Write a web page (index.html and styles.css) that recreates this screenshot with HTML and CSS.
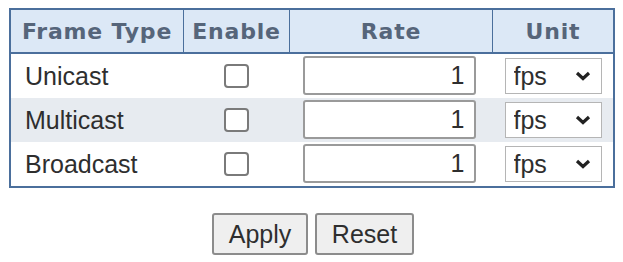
FILE: index.html
```html
<!DOCTYPE html>
<html lang="en">
<head>
    <meta charset="UTF-8">
    <title>Storm Control</title>
    <link rel="stylesheet" href="styles.css">
</head>
<body>
    <div class="page">
        <table class="storm-table">
            <thead>
                <tr>
                    <th class="col-type">Frame Type</th>
                    <th class="col-enable">Enable</th>
                    <th class="col-rate">Rate</th>
                    <th class="col-unit">Unit</th>
                </tr>
            </thead>
            <tbody>
                <tr>
                    <td class="type">Unicast</td>
                    <td class="enable"><input type="checkbox" class="chk"></td>
                    <td class="rate"><input type="text" class="rate-input" value="1"></td>
                    <td class="unit">
                        <div class="select-wrap">
                            <select class="unit-select"><option>fps</option><option>kbps</option></select>
                            <svg class="chevron" width="16" height="10" viewBox="0 0 16 10"><path d="M2 2 L8 7.5 L14 2" fill="none" stroke="#222" stroke-width="3.2"/></svg>
                        </div>
                    </td>
                </tr>
                <tr class="alt">
                    <td class="type">Multicast</td>
                    <td class="enable"><input type="checkbox" class="chk"></td>
                    <td class="rate"><input type="text" class="rate-input" value="1"></td>
                    <td class="unit">
                        <div class="select-wrap">
                            <select class="unit-select"><option>fps</option><option>kbps</option></select>
                            <svg class="chevron" width="16" height="10" viewBox="0 0 16 10"><path d="M2 2 L8 7.5 L14 2" fill="none" stroke="#222" stroke-width="3.2"/></svg>
                        </div>
                    </td>
                </tr>
                <tr>
                    <td class="type">Broadcast</td>
                    <td class="enable"><input type="checkbox" class="chk"></td>
                    <td class="rate"><input type="text" class="rate-input" value="1"></td>
                    <td class="unit">
                        <div class="select-wrap">
                            <select class="unit-select"><option>fps</option><option>kbps</option></select>
                            <svg class="chevron" width="16" height="10" viewBox="0 0 16 10"><path d="M2 2 L8 7.5 L14 2" fill="none" stroke="#222" stroke-width="3.2"/></svg>
                        </div>
                    </td>
                </tr>
            </tbody>
        </table>
        <div class="buttons">
            <button class="btn btn-apply">Apply</button>
            <button class="btn btn-reset">Reset</button>
        </div>
    </div>
</body>
</html>
```

FILE: styles.css
```css
body {
    margin: 0;
    background: #fff;
    font-family: "Liberation Sans", Arial, sans-serif;
    color: #333;
}

.page {
    padding: 8px 8px 0 9px;
    width: 606px;
}

.storm-table {
    border-collapse: collapse;
    width: 606px;
    border: 2px solid #4b6f9c;
    table-layout: fixed;
}

.storm-table th {
    height: 42px;
    padding: 0;
    background: #dce8f6;
    color: #56657a;
    font-family: "DejaVu Sans", Verdana, sans-serif;
    font-weight: bold;
    font-size: 22px;
    letter-spacing: 0.8px;
    text-align: center;
    border-right: 1px solid #4b6f9c;
    border-bottom: 2px solid #4b6f9c;
}

.col-type { width: 172px; }
.col-enable { width: 105px; }
.col-rate { width: 202px; }

.storm-table td {
    height: 44px;
    padding: 0;
    font-size: 25px;
    vertical-align: middle;
}

.storm-table tr.alt td {
    background: #e7ebf0;
}

.type {
    padding-left: 14px !important;
    color: #2e2e2e;
}

.enable {
    text-align: center;
}

.chk {
    appearance: none;
    -webkit-appearance: none;
    width: 25px;
    height: 24px;
    margin: -3px 0 0 0;
    border: 2px solid #7a7a7a;
    border-radius: 4px;
    background: #fff;
    vertical-align: middle;
}

.rate {
    padding-left: 13px !important;
}

.rate-input {
    box-sizing: border-box;
    width: 173px;
    height: 39px;
    margin-top: -1px;
    border: 2px solid #9a9a9a;
    border-radius: 3px;
    padding: 0 9px 0 4px;
    text-align: right;
    font-family: "Liberation Sans", Arial, sans-serif;
    font-size: 25px;
    color: #2e2e2e;
    background: #fff;
    display: block;
}

.unit {
    padding-left: 12px !important;
}

.select-wrap {
    position: relative;
    width: 97px;
    height: 36px;
}

.unit-select {
    appearance: none;
    -webkit-appearance: none;
    box-sizing: border-box;
    width: 97px;
    height: 36px;
    border: 1px solid #b5b5b5;
    border-radius: 0;
    padding: 0 0 0 8px;
    font-family: "Liberation Sans", Arial, sans-serif;
    font-size: 25px;
    color: #2e2e2e;
    background: #fff;
}

.chevron {
    position: absolute;
    right: 11px;
    top: 13px;
    pointer-events: none;
}

.buttons {
    display: flex;
    justify-content: center;
    gap: 7px;
    margin-top: 25px;
    padding-left: 2px;
}

.btn {
    height: 42px;
    border: 2px solid #8c8c8c;
    border-radius: 3px;
    background: #efefef;
    font-family: "Liberation Sans", Arial, sans-serif;
    font-size: 25px;
    color: #2e2e2e;
    padding: 0 10px;
}

.btn-apply { width: 96px; }
.btn-reset { width: 99px; }
```
